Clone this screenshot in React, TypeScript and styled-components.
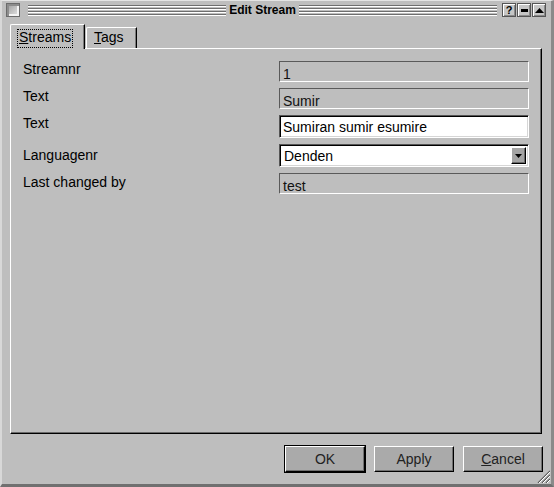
import React from 'react';
import styled, { createGlobalStyle } from 'styled-components';

const GlobalStyle = createGlobalStyle`
  html, body {
    margin: 0;
    padding: 0;
    background: #bebebe;
  }
  body {
    font-family: "Liberation Sans", Arial, sans-serif;
  }
`;

const fields = [
  { label: 'Streamnr', kind: 'readonly', value: '1', drop: 0 },
  { label: 'Text', kind: 'readonly', value: 'Sumir', drop: 0 },
  { label: 'Text', kind: 'input', value: 'Sumiran sumir esumire', drop: 0 },
  { label: 'Languagenr', kind: 'combo', value: 'Denden', drop: 3 },
  { label: 'Last changed by', kind: 'readonly', value: 'test', drop: 1 },
];

export default function App() {
  return (
    <>
      <GlobalStyle />
      <Window>
        <TitleBar>
          <CloseBox />
          <Groove />
          <Title>Edit Stream</Title>
          <Groove />
          <TitleButtons>
            <TitleButton>?</TitleButton>
            <TitleButton>
              <svg width="7" height="3" viewBox="0 0 7 3">
                <rect width="7" height="3" fill="#000" />
              </svg>
            </TitleButton>
            <TitleButton>
              <svg width="9" height="5" viewBox="0 0 9 5">
                <polygon points="4.5,0 9,5 0,5" fill="#000" />
              </svg>
            </TitleButton>
          </TitleButtons>
        </TitleBar>

        <Body>
          <TabBar>
            <Tab active>
              <FocusRect>
                <u>S</u>treams
              </FocusRect>
            </Tab>
            <Tab>
              <TabText>
                <u>T</u>ags
              </TabText>
            </Tab>
          </TabBar>

          <Pane>
            <Form>
              {fields.map((f, i) => (
                <React.Fragment key={i}>
                  <Label drop={f.drop}>{f.label}</Label>
                  {f.kind === 'input' && <TextInput defaultValue={f.value} />}
                  {f.kind === 'combo' && (
                    <Combo>
                      <ComboText>{f.value}</ComboText>
                      <ComboButton>
                        <svg width="7" height="4" viewBox="0 0 7 4">
                          <polygon points="0,0 7,0 3.5,4" fill="#000" />
                        </svg>
                      </ComboButton>
                    </Combo>
                  )}
                  {f.kind === 'readonly' && <ReadOnlyField>{f.value}</ReadOnlyField>}
                </React.Fragment>
              ))}
            </Form>
          </Pane>

          <ButtonRow>
            <PushButton isDefault>
              <ButtonFace>OK</ButtonFace>
            </PushButton>
            <PushButton>
              <ButtonFace>Apply</ButtonFace>
            </PushButton>
            <PushButton>
              <ButtonFace>
                <u>C</u>ancel
              </ButtonFace>
            </PushButton>
          </ButtonRow>
        </Body>

        <Grip width="16" height="16" viewBox="0 0 16 16">
          {[4, 8, 12].map((k) => (
            <g key={k}>
              <line x1={16 - k} y1="16" x2="16" y2={16 - k} stroke="#5a5a5a" strokeWidth="1.2" />
              <line x1={17 - k} y1="16" x2="16" y2={17 - k} stroke="#ffffff" strokeWidth="1" />
            </g>
          ))}
        </Grip>
      </Window>
    </>
  );
}

const Window = styled.div`
  position: relative;
  box-sizing: border-box;
  width: 554px;
  height: 487px;
  display: flex;
  flex-direction: column;
  background: #bebebe;
  border-top: 1px solid #e4e4e4;
  border-left: 2px solid #d8d8d8;
  border-right: 3px solid #8a8a8a;
  border-bottom: 3px solid #707070;
`;

const TitleBar = styled.div`
  display: flex;
  align-items: center;
  height: 18px;
  padding: 0 5px 0 4px;
`;

const CloseBox = styled.div`
  box-sizing: border-box;
  width: 14px;
  height: 14px;
  margin-right: 8px;
  border: 1px solid #6a6a6a;
  background: linear-gradient(135deg, #9a9a9a, #e8e8e8);
  box-shadow: inset 2px 2px 0 #8c8c8c, inset -2px -2px 0 #f4f4f4;
`;

const Groove = styled.div`
  flex: 1;
  height: 12px;
  background: repeating-linear-gradient(
    to bottom,
    transparent 0 1px,
    #6e6e6e 1px 2px,
    #ffffff 2px 3px
  );
`;

const Title = styled.div`
  padding: 0 3px;
  font-size: 12px;
  font-weight: bold;
  color: #000;
  line-height: 14px;
`;

const TitleButtons = styled.div`
  display: flex;
  gap: 1px;
  margin-left: 5px;
`;

const TitleButton = styled.div`
  box-sizing: border-box;
  width: 14px;
  height: 14px;
  display: flex;
  align-items: center;
  justify-content: center;
  border: 1px solid #555;
  background: #c6c6c6;
  box-shadow: inset 1px 1px 0 #ffffff, inset -1px -1px 0 #8a8a8a;
  font-size: 11px;
  font-weight: bold;
  color: #000;
  line-height: 11px;
`;

const Body = styled.div`
  flex: 1;
  display: flex;
  flex-direction: column;
  padding: 5px 9px 11px 8px;
  min-height: 0;
`;

const TabBar = styled.div`
  display: flex;
  align-items: flex-end;
  gap: 1px;
  height: 24px;
`;

const Tab = styled.div<{ active?: boolean }>`
  position: relative;
  z-index: ${(p) => (p.active ? 1 : 0)};
  box-sizing: border-box;
  width: ${(p) => (p.active ? '75px' : '51px')};
  height: ${(p) => (p.active ? '25px' : '21px')};
  margin-bottom: ${(p) => (p.active ? '-1px' : '0')};
  padding: ${(p) => (p.active ? '4px 0 0 6px' : '2px 0 0 7px')};
  background: #bebebe;
  border-top: 1px solid #ffffff;
  border-left: 1px solid #ffffff;
  border-right: 1px solid #000;
  border-top-left-radius: 2px;
  box-shadow: inset -1px 0 0 #7a7a7a;
  font-size: 14px;
  color: #000;
`;

const FocusRect = styled.div`
  box-sizing: border-box;
  width: 56px;
  height: 19px;
  padding-left: 1px;
  border: 1px dotted #000;
  line-height: 14px;
`;

const TabText = styled.div`
  line-height: 14px;
`;

const Pane = styled.div`
  flex: 1;
  box-sizing: border-box;
  padding: 12px 12px 0 12px;
  border-top: 1px solid #ffffff;
  border-left: 1px solid #ffffff;
  border-right: 1px solid #000;
  border-bottom: 1px solid #000;
  box-shadow: inset -1px -1px 0 #6a6a6a;
`;

const Form = styled.div`
  display: grid;
  grid-template-columns: 1fr 250px;
  row-gap: 6px;
`;

const Label = styled.div<{ drop: number }>`
  align-self: start;
  height: 16px;
  margin-top: ${(p) => p.drop}px;
  font-size: 14px;
  line-height: 16px;
  color: #000;
  white-space: nowrap;
`;

const ReadOnlyField = styled.div`
  box-sizing: border-box;
  height: 21px;
  padding: 4px 3px 0;
  overflow: hidden;
  border-top: 1px solid #5a5a5a;
  border-left: 1px solid #5a5a5a;
  border-bottom: 1px solid #ffffff;
  border-right: 1px solid #ffffff;
  font-size: 14px;
  line-height: 16px;
  color: #111;
`;

const sunken = `
  box-sizing: border-box;
  height: 23px;
  border-top: 1px solid #555;
  border-left: 1px solid #555;
  border-bottom: 1px solid #ffffff;
  border-right: 1px solid #ffffff;
  box-shadow: inset 1px 1px 0 #000, inset -1px -1px 0 #d6d6d6;
  background: #ffffff;
`;

const TextInput = styled.input`
  ${sunken}
  width: 100%;
  margin: 0;
  padding: 0 0 0 3px;
  outline: none;
  font-family: "Liberation Sans", Arial, sans-serif;
  font-size: 14px;
  color: #000;
`;

const Combo = styled.div`
  ${sunken}
  display: flex;
  align-items: center;
  padding: 0 2px 0 4px;
`;

const ComboText = styled.div`
  flex: 1;
  font-size: 14px;
  line-height: 16px;
  color: #000;
`;

const ComboButton = styled.div`
  box-sizing: border-box;
  width: 15px;
  height: 17px;
  display: flex;
  align-items: center;
  justify-content: center;
  background: #a4a4a4;
  border-top: 1px solid #ffffff;
  border-left: 1px solid #ffffff;
  border-right: 1px solid #000;
  border-bottom: 1px solid #000;
  box-shadow: inset -1px -1px 0 #6a6a6a;
`;

const ButtonRow = styled.div`
  display: flex;
  justify-content: flex-end;
  gap: 7px;
  margin: 11px -2px 0 0;
`;

const PushButton = styled.div<{ isDefault?: boolean }>`
  box-sizing: border-box;
  width: 82px;
  height: 28px;
  border: 1px solid ${(p) => (p.isDefault ? '#000' : 'transparent')};
  display: flex;
`;

const ButtonFace = styled.div`
  flex: 1;
  display: flex;
  align-items: center;
  justify-content: center;
  background: #aaaaaa;
  border-top: 1px solid #ffffff;
  border-left: 1px solid #ffffff;
  border-right: 1px solid #000;
  border-bottom: 1px solid #000;
  box-shadow: inset -1px -1px 0 #707070;
  font-size: 14px;
  color: #222;
`;

const Grip = styled.svg`
  position: absolute;
  right: 1px;
  bottom: 1px;
`;
